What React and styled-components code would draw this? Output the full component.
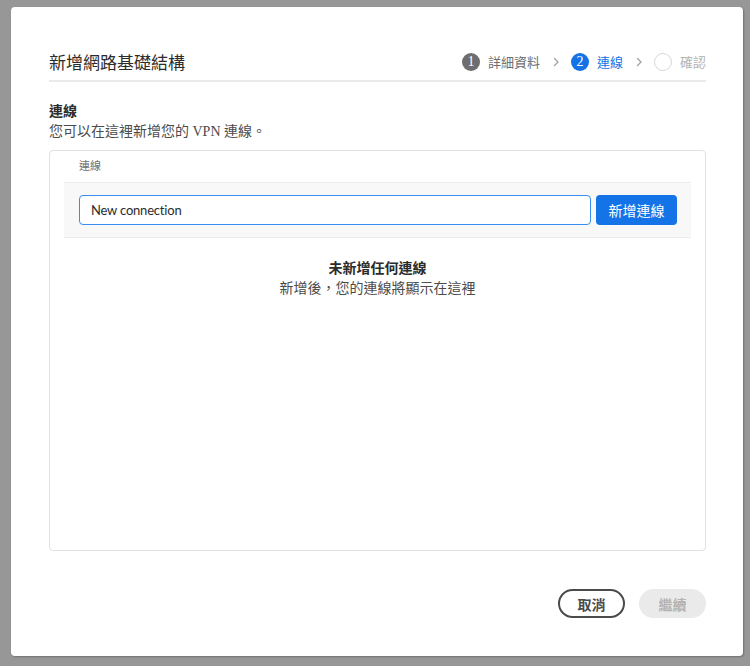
import React from "react";
import styled, { createGlobalStyle } from "styled-components";

const Global = createGlobalStyle`
  html, body { margin: 0; padding: 0; }
  body {
    background: #979797;
    font-family: "Liberation Serif", "Noto Sans CJK TC", serif;
    color: #2c2c2c;
  }
  * { box-sizing: border-box; }
`;

const Page = styled.div`
  width: 750px;
  height: 666px;
  padding: 7px 7px 10px 11px;
`;

const Dialog = styled.div`
  width: 732px;
  height: 649px;
  background: #fff;
  border-radius: 4px;
  box-shadow: 1px 1px 2px rgba(0, 0, 0, 0.25);
  padding: 39px 37px 38px 38px;
  display: flex;
  flex-direction: column;
`;

const Header = styled.div`
  height: 31px;
  padding-bottom: 3px;
  display: flex;
  align-items: center;
  justify-content: space-between;
  border-bottom: 2px solid #eaeaea;
  box-sizing: content-box;
`;

const Title = styled.h1`
  margin: 0;
  font-size: 17px;
  font-weight: normal;
  color: #2c2c2c;
`;

const Steps = styled.div`
  display: flex;
  align-items: center;
`;

const Step = styled.div`
  display: flex;
  align-items: center;
  gap: 8px;
  font-size: 13px;
  color: ${(p) => (p.$state === "active" ? "#1473e6" : p.$state === "done" ? "#6e6e6e" : "#b3b3b3")};
`;

const Circle = styled.span`
  width: 18px;
  height: 18px;
  border-radius: 50%;
  display: inline-flex;
  align-items: center;
  justify-content: center;
  font-size: 14px;
  color: #fff;
  background: ${(p) => (p.$state === "active" ? "#1473e6" : p.$state === "done" ? "#6e6e6e" : "#fff")};
  border: ${(p) => (p.$state === "todo" ? "1.5px solid #d8d8d8" : "none")};
`;

const Chevron = styled.span`
  display: inline-flex;
  margin: 0 11px 0 13px;
  color: #a0a0a0;
`;

const SectionTitle = styled.h2`
  margin: 20px 0 0;
  font-size: 14px;
  line-height: 20px;
  font-weight: bold;
  color: #2c2c2c;
`;

const Description = styled.p`
  margin: 0;
  font-size: 14px;
  line-height: 20px;
  color: #4b4b4b;
`;

const Card = styled.div`
  margin-top: 8px;
  flex: 1;
  border: 1px solid #e1e1e1;
  border-radius: 4px;
  padding: 0 14px;
  display: flex;
  flex-direction: column;
`;

const CardLabel = styled.div`
  height: 31px;
  padding: 0 0 3px 15px;
  display: flex;
  align-items: center;
  font-size: 11px;
  color: #6e6e6e;
  font-family: "Noto Sans CJK TC", sans-serif;
`;

const AddBand = styled.div`
  background: #f8f8f8;
  border-top: 1px solid #ececec;
  border-bottom: 1px solid #ececec;
  padding: 12px 14px 12px 15px;
  display: flex;
  gap: 5px;
`;

const TextInput = styled.input`
  flex: 1;
  height: 30px;
  border: 1px solid #378ef0;
  border-radius: 4px;
  padding: 0 11px;
  font-family: "Lato", "Noto Sans", sans-serif;
  font-size: 13px;
  letter-spacing: -0.2px;
  color: #2c2c2c;
  background: #fff;
  outline: none;
`;

const PrimaryButton = styled.button`
  width: 81px;
  height: 30px;
  border: none;
  border-radius: 4px;
  background: #1473e6;
  color: #fff;
  font-family: "Noto Sans CJK TC", sans-serif;
  font-size: 14px;
  cursor: pointer;
`;

const Empty = styled.div`
  margin-top: 21px;
  text-align: center;
  font-size: 14px;
  line-height: 20px;
`;

const EmptyTitle = styled.div`
  font-weight: bold;
  color: #2c2c2c;
`;

const EmptyText = styled.div`
  color: #4b4b4b;
`;

const Footer = styled.div`
  margin-top: 38px;
  display: flex;
  justify-content: flex-end;
  gap: 14px;
`;

const PillButton = styled.button`
  height: 29px;
  min-width: 67px;
  padding: 0 14px;
  border-radius: 15px;
  font-family: "Noto Sans CJK TC", sans-serif;
  font-size: 14px;
  font-weight: bold;
  border: ${(p) => (p.$disabled ? "2px solid #eaeaea" : "2px solid #4b4b4b")};
  background: ${(p) => (p.$disabled ? "#eaeaea" : "#fff")};
  color: ${(p) => (p.$disabled ? "#b3b3b3" : "#4b4b4b")};
`;

const ChevronIcon = () => (
  <svg width="7" height="10" viewBox="0 0 7 10">
    <path d="M1.5 1.5 L5 5 L1.5 8.5" fill="none" stroke="currentColor" strokeWidth="1.3" strokeLinecap="round" strokeLinejoin="round" />
  </svg>
);

export default function App() {
  return (
    <>
      <Global />
      <Page>
        <Dialog>
          <Header>
            <Title>新增網路基礎結構</Title>
            <Steps>
              <Step $state="done">
                <Circle $state="done">1</Circle>
                詳細資料
              </Step>
              <Chevron><ChevronIcon /></Chevron>
              <Step $state="active">
                <Circle $state="active">2</Circle>
                連線
              </Step>
              <Chevron><ChevronIcon /></Chevron>
              <Step $state="todo">
                <Circle $state="todo" />
                確認
              </Step>
            </Steps>
          </Header>
          <SectionTitle>連線</SectionTitle>
          <Description>您可以在這裡新增您的 VPN 連線。</Description>
          <Card>
            <CardLabel>連線</CardLabel>
            <AddBand>
              <TextInput defaultValue="New connection" />
              <PrimaryButton>新增連線</PrimaryButton>
            </AddBand>
            <Empty>
              <EmptyTitle>未新增任何連線</EmptyTitle>
              <EmptyText>新增後，您的連線將顯示在這裡</EmptyText>
            </Empty>
          </Card>
          <Footer>
            <PillButton>取消</PillButton>
            <PillButton $disabled disabled>繼續</PillButton>
          </Footer>
        </Dialog>
      </Page>
    </>
  );
}
